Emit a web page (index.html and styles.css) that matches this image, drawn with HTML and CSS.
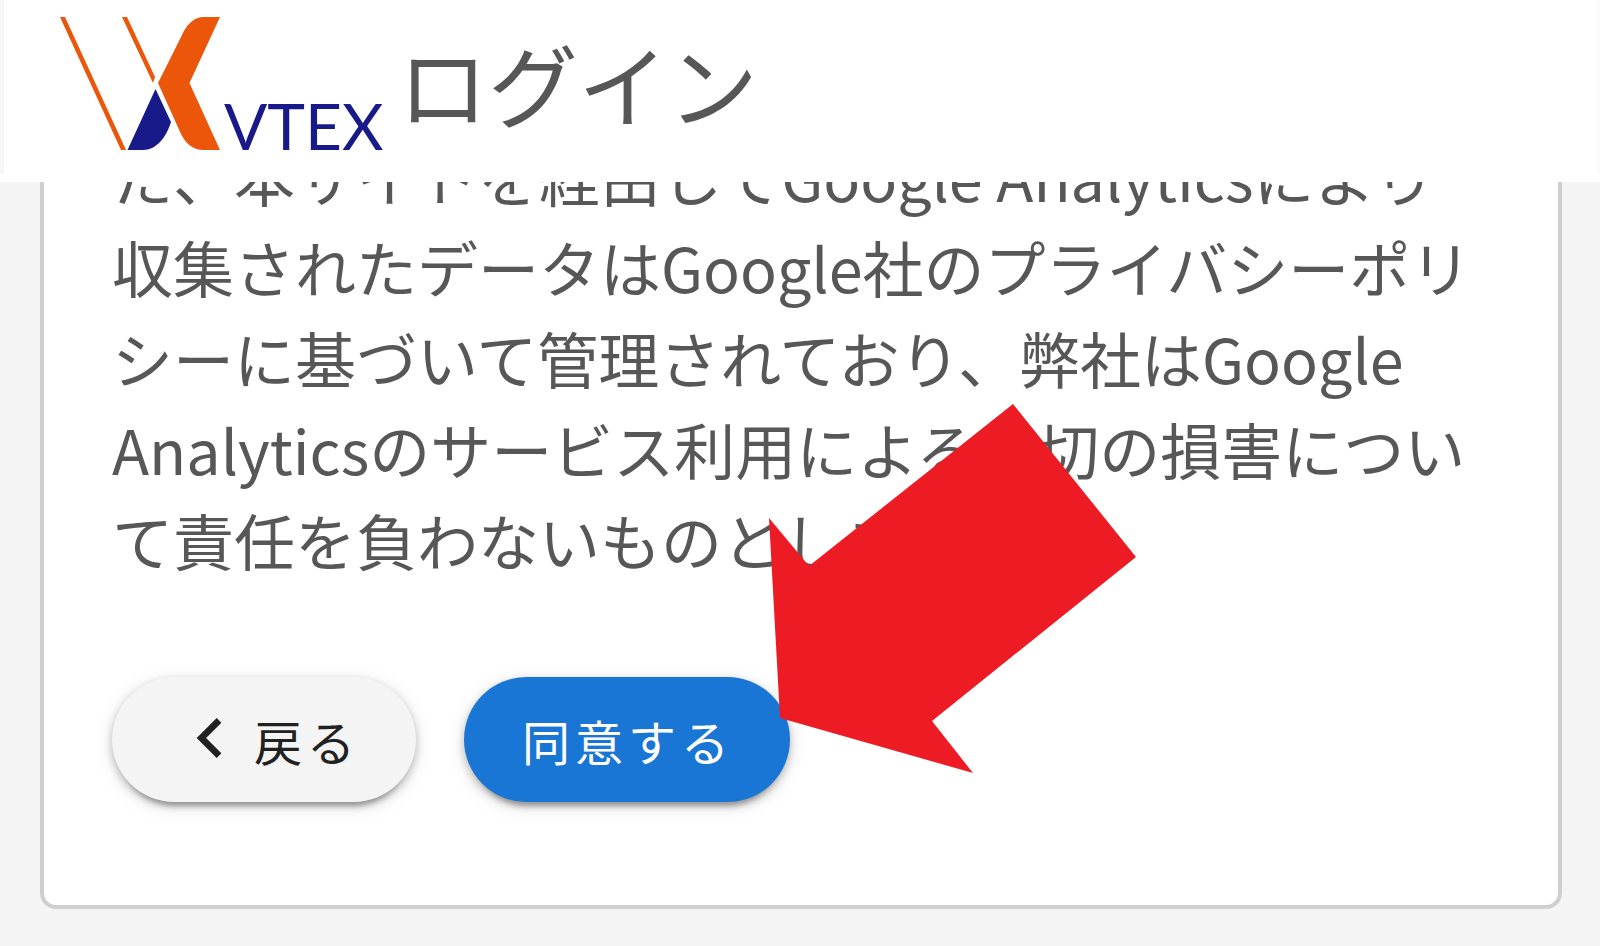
FILE: index.html
```html
<!DOCTYPE html>
<html lang="ja">
<head>
<meta charset="utf-8">
<title>ログイン - VTEX</title>
<link rel="stylesheet" href="styles.css">
</head>
<body>
<header class="app-bar">
  <div class="app-bar-inner">
    <svg class="logo" viewBox="0 0 328 140" role="img" aria-label="VTEX">
      <g class="logo-orange">
        <path d="M4 5h5l61 133h-5z"/>
        <path d="M66 5h5l28 60-2 6z"/>
        <path d="M148 5h16l-30.500 66L164 138h-16c-11 0-18-6-23-16L102 71l24-48c5-11 12-18 22-18z"/>
      </g>
      <path class="logo-navy" d="M99.500 77L115 110c-5 16-15 28-28 28H71.500z"/>
      <text class="logo-word" x="168" y="138">VTEX</text>
    </svg>
    <h1 class="title">ログイン</h1>
  </div>
</header>
<main class="content">
  <section class="card">
    <p class="terms">た、本サイトを経由してGoogle Analyticsにより<br>収集されたデータはGoogle社のプライバシーポリ<br>シーに基づいて管理されており、弊社はGoogle<br>Analyticsのサービス利用による一切の損害につい<br>て責任を負わないものとします。</p>
    <div class="actions">
      <button class="btn btn-back" type="button">
        <svg class="chevron" viewBox="0 0 24 24" aria-hidden="true"><path d="M15.410 16.580L10.830 12l4.580-4.590L14 6l-6 6 6 6z"/></svg>
        <span>戻る</span>
      </button>
      <div class="agree">
        <button class="btn btn-agree" type="button">同意する</button>
        <svg class="arrow" viewBox="0 0 367 369" aria-hidden="true"><path d="M244 0l123 153-204 164 41 52L11 314 0 114l40 48z"/></svg>
      </div>
    </div>
  </section>
</main>
</body>
</html>
```
FILE: styles.css
```css
* {
  box-sizing: border-box;
}

body {
  margin: 0;
  min-height: 100vh;
  background: #f4f4f4;
  color: #575757;
  font-family: "Noto Sans CJK JP", sans-serif;
  overflow: hidden;
}

.app-bar {
  position: relative;
  z-index: 1;
  padding-bottom: 8px;
  background: #fff;
}

.app-bar-inner {
  display: flex;
  align-items: center;
  height: 174px;
  padding-left: 52px;
  border-left: 4px solid #f6f6f6;
  border-right: 3px solid #fafafa;
}

.logo {
  width: 328px;
  height: 140px;
  margin-bottom: 10px;
  overflow: visible;
}

.logo-orange {
  fill: #eb560b;
}

.logo-navy {
  fill: #171a88;
}

.logo-word {
  fill: #171a88;
  font-family: Lato, sans-serif;
  font-size: 64px;
}

.title {
  margin: 0 0 10px 14px;
  font-size: 90px;
  font-weight: 400;
  line-height: 132px;
}

.content {
  padding: 0 38px 38px 40px;
}

.card {
  margin-top: -56px;
  padding: 0 68px 103px;
  border: 4px solid #cfcfcf;
  border-radius: 16px;
  background: #fff;
}

.terms {
  margin: 0;
  font-size: 61px;
  line-height: 91px;
  white-space: nowrap;
}

.actions {
  display: flex;
  gap: 48px;
  margin-top: 92px;
}

.agree {
  position: relative;
}

.btn {
  display: flex;
  align-items: center;
  height: 125px;
  padding: 0 56px 0 58px;
  border: 0;
  border-radius: 63px;
  font-family: inherit;
  font-size: 48px;
  letter-spacing: 5px;
  box-shadow: 0 12px 4px -8px rgba(0, 0, 0, 0.2), 0 4px 8px rgba(0, 0, 0, 0.24), 0 4px 20px rgba(0, 0, 0, 0.1);
}

.btn-back {
  gap: 4px;
  background: #f4f4f4;
  color: #212121;
}

.btn-agree {
  background: #1a76d4;
  color: #fff;
}

.chevron {
  width: 80px;
  height: 80px;
  margin-bottom: 4px;
  fill: currentColor;
}

.arrow {
  position: absolute;
  left: 305px;
  bottom: 29px;
  width: 367px;
  height: 369px;
  fill: #ed1c24;
  pointer-events: none;
}
```
